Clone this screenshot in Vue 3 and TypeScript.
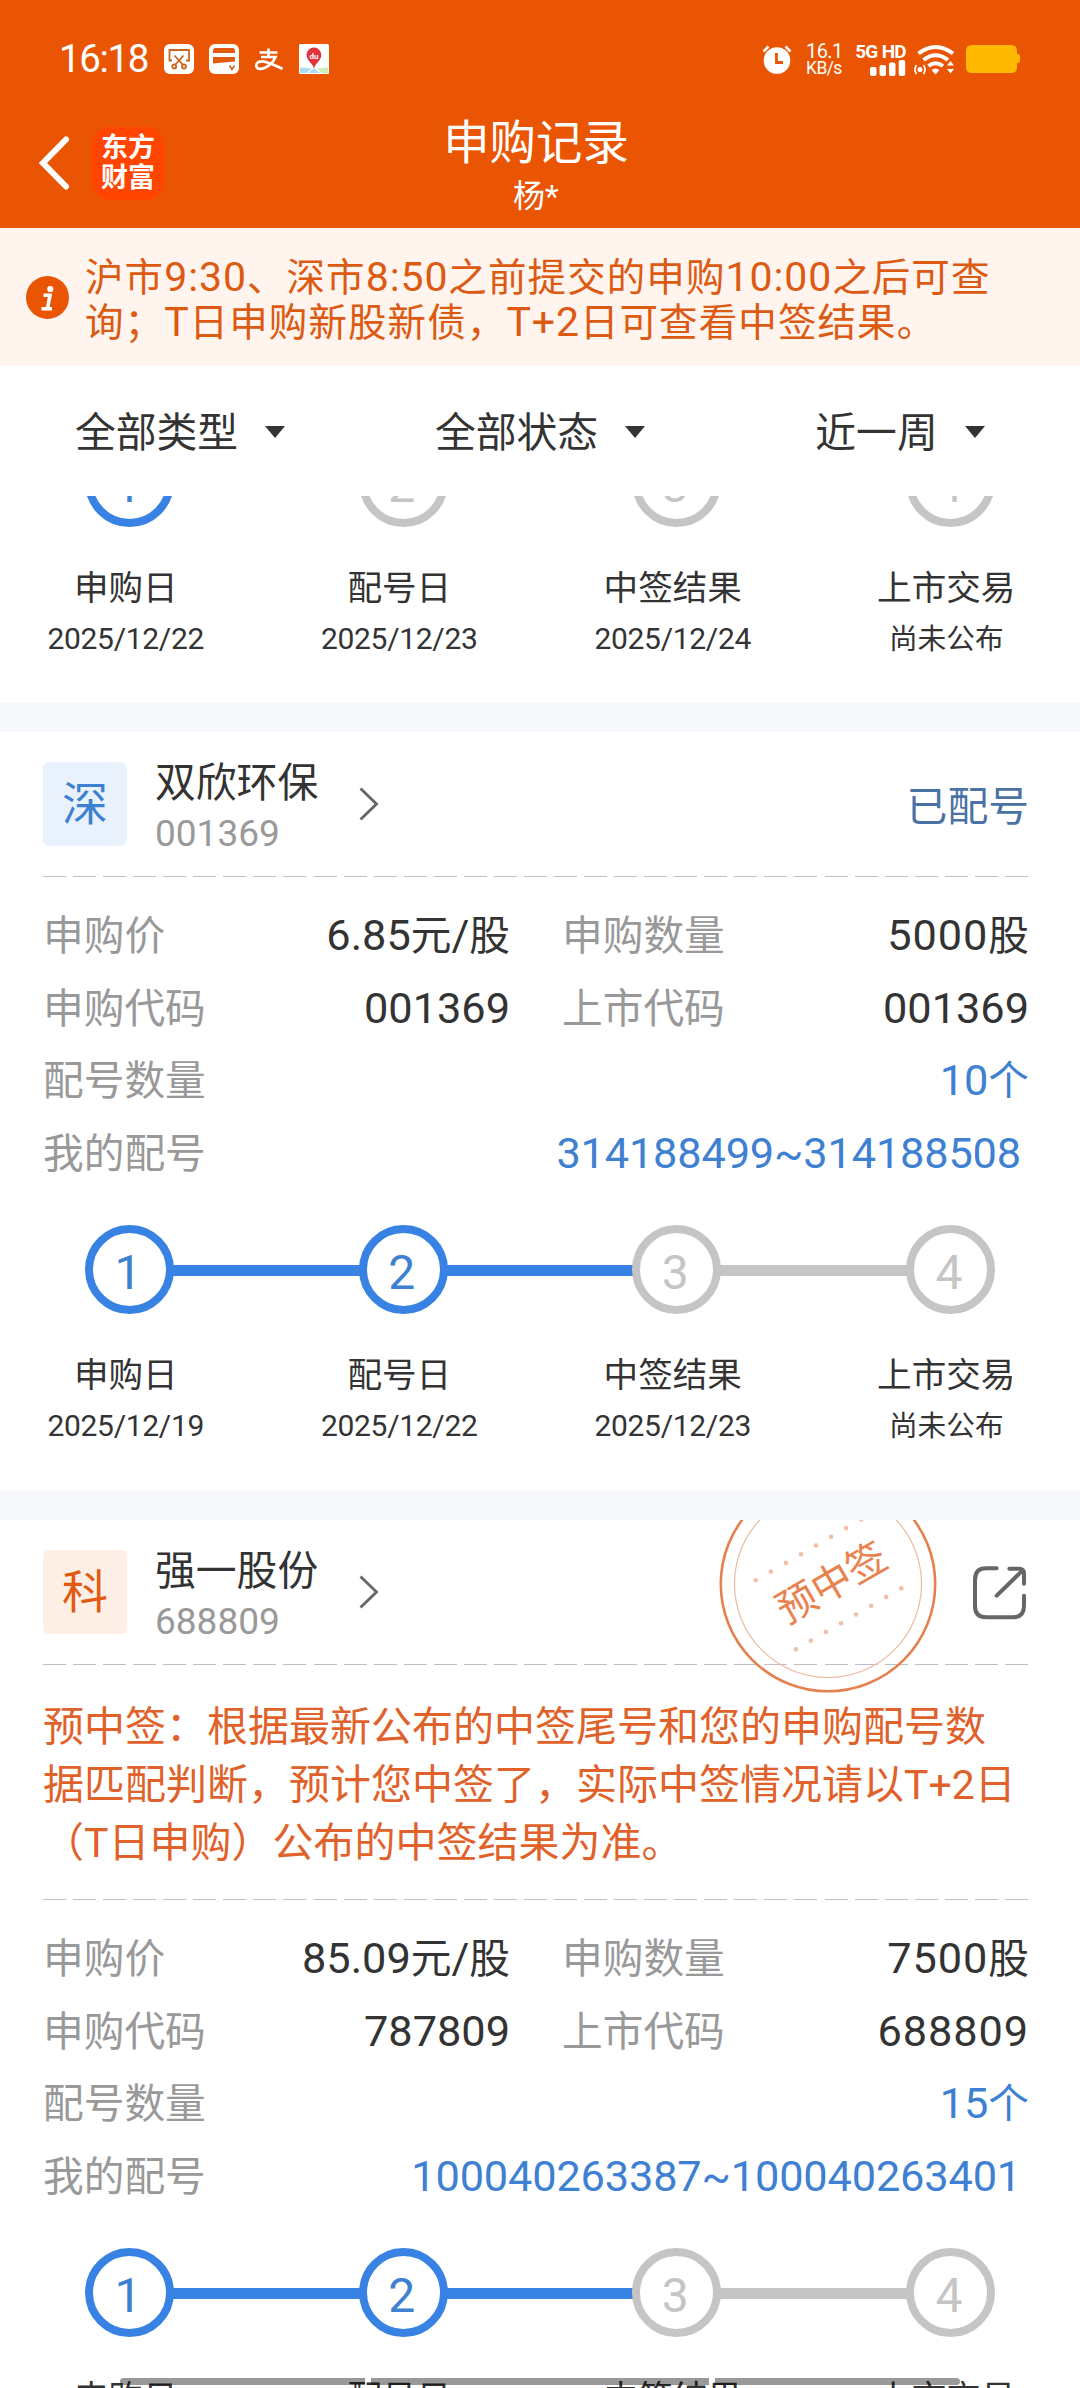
<script setup lang="ts">
interface Step {
  label: string
  date: string
  done: boolean
}
interface Item {
  market?: string
  tone?: 'blue' | 'orange'
  name?: string
  code?: string
  status?: string
  prediction?: string[]
  price?: string
  amount?: string
  applyCode?: string
  listCode?: string
  lotCount?: string
  lots?: string
  steps: Step[]
}
interface Run {
  text: string
  num: boolean
}

const makeSteps = (dates: string[], done: number): Step[] =>
  ['申购日', '配号日', '中签结果', '上市交易'].map((label, i) => ({
    label,
    date: dates[i],
    done: i < done,
  }))

// Latin digits are set slightly larger than the surrounding Chinese text
const runs = (s: string): Run[] =>
  (s.match(/[\x20-\x7e]+|[^\x20-\x7e]+/g) ?? []).map((text) => ({
    text,
    num: /^[\x20-\x7e]/.test(text),
  }))

const noticeLines = [
  '沪市9:30、深市8:50之前提交的申购10:00之后可查',
  '询；T日申购新股新债，T+2日可查看中签结果。',
]
const filters = ['全部类型', '全部状态', '近一周']

const items: Item[] = [
  { steps: makeSteps(['2025/12/22', '2025/12/23', '2025/12/24', '尚未公布'], 1) },
  {
    market: '深',
    tone: 'blue',
    name: '双欣环保',
    code: '001369',
    status: '已配号',
    price: '6.85元/股',
    amount: '5000股',
    applyCode: '001369',
    listCode: '001369',
    lotCount: '10个',
    lots: '314188499~314188508',
    steps: makeSteps(['2025/12/19', '2025/12/22', '2025/12/23', '尚未公布'], 2),
  },
  {
    market: '科',
    tone: 'orange',
    name: '强一股份',
    code: '688809',
    prediction: [
      '预中签：根据最新公布的中签尾号和您的申购配号数',
      '据匹配判断，预计您中签了，实际中签情况请以T+2日',
      '（T日申购）公布的中签结果为准。',
    ],
    price: '85.09元/股',
    amount: '7500股',
    applyCode: '787809',
    listCode: '688809',
    lotCount: '15个',
    lots: '100040263387~100040263401',
    steps: makeSteps(['2025/12/19', '2025/12/22', '2025/12/23', '尚未公布'], 2),
  },
]
const dots = [0, 1, 2, 3, 4, 5, 6, 7]
</script>

<template>
  <div class="app">
    <header class="top">
      <div class="statusbar">
        <div class="sb-left">
          <span class="time">16:18</span>
          <svg class="sb-icon" width="30" height="30" viewBox="0 0 30 30">
            <rect width="30" height="30" rx="6" fill="#fff" />
            <g fill="none" stroke="#c9651f" stroke-width="1.8">
              <path d="M8 16.5H5.5V6H25v10.500H22" />
              <path d="M10.500 11.500L19 21M19.500 11.500L11 21" />
              <circle cx="10.200" cy="22.500" r="2" />
              <circle cx="20" cy="22.500" r="2" />
            </g>
          </svg>
          <svg class="sb-icon" width="30" height="30" viewBox="0 0 30 30">
            <rect width="30" height="30" rx="6" fill="#fff" />
            <path d="M4 9V6.500Q4 4 6.500 4H23.500Q26 4 26 6.500V9Z" fill="#e05a10" />
            <path d="M4 13H26V17.500L4 19.500Z" fill="#e05a10" />
            <path d="M20.500 21.500L23 25.500L25.500 21.500" fill="none" stroke="#c9651f" stroke-width="1.500" />
          </svg>
          <svg class="sb-icon pay" width="30" height="30" viewBox="0 0 30 30">
            <g fill="none" stroke="#fff">
              <path d="M5.500 8.500H23.500M14.500 4.500V13.500" stroke-width="2.700" />
              <path d="M7 13H21.500Q18.500 20 11.500 23.500Q3.500 27 2.200 22Q2.200 17 9 17.300Q14 17.800 28.500 24.800" stroke-width="2.700" />
            </g>
          </svg>
          <svg class="sb-icon" width="30" height="30" viewBox="0 0 30 30">
            <rect width="30" height="30" rx="1.500" fill="#fff" />
            <path d="M1 23.500L13 24.500L7 29H1Z" fill="#a9dcf5" />
            <path d="M9 29L15 24L21 29Z" fill="#a9dcf5" />
            <path d="M17 24.500L29 23.500V29H23Z" fill="#cdeeb4" />
            <path d="M15 24.500C14 19.500 7.500 16.500 7.500 11A7.300 7.300 0 0 1 22.300 11C22.300 16.500 16 19.500 15 24.500Z" fill="#e2323c" />
            <text x="15" y="14.500" text-anchor="middle" font-size="8" font-weight="700" fill="#fff" font-family="Roboto, sans-serif">du</text>
          </svg>
        </div>
        <div class="sb-right">
          <svg width="30" height="30" viewBox="0 0 30 30">
            <circle cx="15" cy="16.500" r="13.300" fill="#fff" />
            <path d="M1.500 7.500L6.500 2.500M28.500 7.500L23.500 2.500" stroke="#fff" stroke-width="2.600" fill="none" />
            <path d="M14.500 9V18.500H21" stroke="#e95605" stroke-width="2.800" fill="none" />
          </svg>
          <div class="speed"><span class="sp1">16.1</span><span class="sp2">KB/s</span></div>
          <div class="cell">
            <span class="net">5G HD</span>
            <svg width="36" height="16" viewBox="0 0 36 16">
              <g fill="#fff">
                <rect x="0" y="7" width="6.500" height="9" rx="2" />
                <rect x="9.500" y="5" width="6.500" height="11" rx="2" />
                <rect x="19" y="2.500" width="6.500" height="13.500" rx="2" />
                <rect x="28.700" y="0" width="6.500" height="16" rx="2" />
              </g>
            </svg>
          </div>
          <svg class="wifi" width="42" height="31" viewBox="0 0 42 31">
            <g fill="none" stroke="#fff" stroke-width="4">
              <path d="M4.500 9.500Q21.500 -3.500 39 9.500" />
              <path d="M9.500 16Q21.500 6.500 34 16" />
              <path d="M14.500 22Q21.500 16.500 29 22" />
            </g>
            <path d="M17.500 26Q21.500 23 25.500 26L21.500 30.500Z" fill="#fff" />
            <circle cx="6" cy="25.500" r="2.500" fill="#fff" />
            <path d="M2.500 21Q-0.500 25.500 2.500 30M9.500 21Q12.500 25.500 9.500 30" fill="none" stroke="#fff" stroke-width="1.700" />
            <path d="M33 21.500L36.500 17L40 21.500ZM33 25L36.500 29.500L40 25Z" fill="#fff" />
          </svg>
          <svg width="55" height="28" viewBox="0 0 55 28">
            <path d="M6 0H45Q51 0 51 6V9H52Q54 9 54 11V16Q54 18 52 18H51V22Q51 28 45 28H6Q0 28 0 22V6Q0 0 6 0Z" fill="#ffb901" />
          </svg>
        </div>
      </div>
      <div class="navbar">
        <div class="nav-left">
          <svg width="32" height="56" viewBox="0 0 32 56">
            <path d="M27 4.500L4 28L27 51.500" fill="none" stroke="#fff" stroke-width="6" stroke-linecap="round" stroke-linejoin="miter" />
          </svg>
          <div class="logo"><span>东方</span><span>财富</span></div>
        </div>
        <div class="titles">
          <h1>申购记录</h1>
          <p>杨*</p>
        </div>
      </div>
    </header>

    <section class="notice">
      <svg width="43" height="43" viewBox="0 0 43 43">
        <circle cx="21.500" cy="21.500" r="21.500" fill="#ea5504" />
        <circle cx="24.300" cy="13" r="3.100" fill="#fff" />
        <path d="M17.500 19.300H24L21.500 32.500M15.500 32.800H26" fill="none" stroke="#fff" stroke-width="3.600" />
      </svg>
      <div class="notice-text">
        <p v-for="(line, n) in noticeLines" :key="n">
          <span v-for="(r, i) in runs(line)" :key="i" :class="{ num: r.num }">{{ r.text }}</span>
        </p>
      </div>
    </section>

    <nav class="filters">
      <div v-for="f in filters" :key="f" class="filter">
        <span>{{ f }}</span>
        <svg width="20" height="12" viewBox="0 0 20 12"><path d="M0 0H20L10 12Z" fill="#333" /></svg>
      </div>
    </nav>

    <main class="list">
      <article v-for="(item, k) in items" :key="k" class="card">
        <template v-if="item.name">
          <svg v-if="item.prediction" class="stamp" width="220" height="220" viewBox="-110 -110 220 220">
            <circle r="107.200" fill="none" stroke="#e5804f" stroke-width="2.600" />
            <circle r="93.500" fill="none" stroke="#efb8a0" stroke-width="1.200" />
            <g fill="#f0bfa8">
              <circle v-for="d in dots" :key="'a' + d" :cx="-72.2 + d * 15.07" :cy="-3.700 - d * 8.700" r="2.300" />
              <circle v-for="d in dots" :key="'b' + d" :cx="-32.2 + d * 15.07" :cy="65.300 - d * 8.700" r="2.300" />
            </g>
            <text class="stamp-text" transform="translate(3.200 -2) rotate(-30)" x="0" y="15" text-anchor="middle">预中签</text>
          </svg>
          <div class="card-head">
            <div class="badge" :class="item.tone">{{ item.market }}</div>
            <div class="ident">
              <span class="name">{{ item.name }}</span>
              <span class="code">{{ item.code }}</span>
            </div>
            <svg class="chev" width="20" height="34" viewBox="0 0 20 34">
              <path d="M1.500 1.500L17.500 17L1.500 32.500" fill="none" stroke="#666" stroke-width="2.800" />
            </svg>
            <span v-if="item.status" class="status">{{ item.status }}</span>
            <svg v-else class="share" width="55" height="55" viewBox="0 0 165 165">
              <g fill="none" stroke="#666" stroke-width="12" stroke-linecap="round" stroke-linejoin="round">
                <path d="M74 10H43Q9 10 9 44V123Q9 157 43 157H122Q156 157 156 123V92" />
                <path d="M112 11H141Q156 11 156 26V56M74 92L151 17" />
              </g>
            </svg>
          </div>
          <div class="dash"></div>
          <template v-if="item.prediction">
            <div class="prediction">
              <p v-for="line in item.prediction" :key="line">{{ line }}</p>
            </div>
            <div class="dash"></div>
          </template>
          <dl class="info">
            <div class="row">
              <dt>申购价</dt>
              <dd class="first"><span v-for="(r, i) in runs(item.price!)" :key="i" :class="{ num: r.num }">{{ r.text }}</span></dd>
              <dt>申购数量</dt>
              <dd class="wide"><span v-for="(r, i) in runs(item.amount!)" :key="i" :class="{ num: r.num }">{{ r.text }}</span></dd>
            </div>
            <div class="row">
              <dt>申购代码</dt>
              <dd class="first"><span class="num">{{ item.applyCode }}</span></dd>
              <dt>上市代码</dt>
              <dd :class="{ wide: !item.listCode!.includes('1') }"><span class="num">{{ item.listCode }}</span></dd>
            </div>
            <div class="row">
              <dt>配号数量</dt>
              <dd class="link"><span v-for="(r, i) in runs(item.lotCount!)" :key="i" :class="{ num: r.num }">{{ r.text }}</span></dd>
            </div>
            <div class="row">
              <dt>我的配号</dt>
              <dd class="link lots"><span class="num">{{ item.lots }}</span></dd>
            </div>
          </dl>
        </template>
        <div class="track">
          <template v-for="(s, i) in item.steps" :key="i">
            <i v-if="i > 0" class="bar" :class="{ on: item.steps[i - 1].done }"></i>
            <b class="dot" :class="{ on: s.done }">{{ i + 1 }}</b>
          </template>
        </div>
        <div class="labels">
          <div v-for="(s, i) in item.steps" :key="i" class="label">
            <span class="l1">{{ s.label }}</span>
            <span class="l2" :class="{ zh: s.date === '尚未公布' }">{{ s.date }}</span>
          </div>
        </div>
      </article>
    </main>

    <div class="home-indicator"><i></i><i></i><i></i></div>
  </div>
</template>

<style>
body {
  margin: 0;
  background: #fff;
}
</style>

<style scoped>
.app {
  position: relative;
  display: flex;
  flex-direction: column;
  width: 1080px;
  height: 2388px;
  overflow: hidden;
  background: #fff;
  color: #333;
  font-family: Roboto, "Noto Sans CJK SC", sans-serif;
}
p,
h1,
dl,
dt,
dd {
  margin: 0;
}
svg {
  display: block;
  flex: none;
}
.top {
  height: 228px;
  flex: none;
  background: #ea5504;
  color: #fff;
}
.statusbar {
  display: flex;
  justify-content: space-between;
  height: 118px;
  box-sizing: border-box;
  padding: 0 59px 0 59px;
}
.sb-left,
.sb-right {
  display: flex;
  align-items: center;
  height: 118px;
}
.sb-left .sb-icon {
  margin-right: 15px;
}
.time {
  width: 105px;
  font-size: 38.5px;
  letter-spacing: -1.4px;
  line-height: 40px;
}
.speed {
  display: flex;
  flex-direction: column;
  width: 37px;
  margin-left: 14px;
  white-space: nowrap;
}
.sp1 {
  font-size: 20px;
  line-height: 17px;
  letter-spacing: -0.6px;
}
.sp2 {
  font-size: 17.5px;
  line-height: 16px;
  letter-spacing: -0.6px;
}
.cell {
  display: flex;
  flex-direction: column;
  align-items: flex-end;
  width: 50px;
  margin-left: 13px;
}
.net {
  font-size: 19px;
  line-height: 17px;
  font-weight: 700;
  letter-spacing: -0.7px;
  white-space: nowrap;
}
.wifi {
  margin: 0 10px 0 8px;
}
.navbar {
  display: grid;
  grid-template-columns: 1fr 200px 1fr;
  height: 110px;
}
.nav-left {
  display: flex;
  height: 90px;
  padding-left: 39px;
  align-items: center;
}
.logo {
  display: flex;
  flex-direction: column;
  justify-content: center;
  align-items: center;
  width: 72px;
  height: 73px;
  margin-left: 21px;
  border-radius: 17px;
  background: #ff4500;
  font-size: 27px;
  line-height: 30px;
  font-weight: 700;
}
.titles {
  width: 192px;
  text-align: center;
}
.titles h1 {
  font-size: 46.4px;
  line-height: 50px;
  font-weight: 400;
}
.titles p {
  font-size: 32px;
  line-height: 36px;
  margin-top: 10px;
}
.notice {
  display: flex;
  flex: none;
  height: 138px;
  box-sizing: border-box;
  padding: 27px 0 0 26px;
  background: #fff4ee;
  color: #dc5a12;
}
.notice > svg {
  margin-top: 21px;
}
.notice-text {
  margin-left: 16px;
  font-size: 38.5px;
  line-height: 44px;
  letter-spacing: 1.1px;
  white-space: nowrap;
}
.notice-text .num {
  font-size: 41px;
  letter-spacing: 0.9px;
}
.filters {
  display: flex;
  flex: none;
  height: 130px;
}
.filter {
  flex: 1;
  display: flex;
  justify-content: center;
  align-items: center;
  gap: 27px;
  height: 132px;
  font-size: 40.8px;
}
.filter span {
  padding-bottom: 5px;
}
.list {
  flex: 1;
  overflow: hidden;
}
.card {
  position: relative;
  overflow: hidden;
  box-sizing: border-box;
  height: 788px;
  border-bottom: 30px solid #f6f8fb;
}
.card:first-child {
  margin-top: -58px;
  height: 294px;
  border-bottom-width: 29px;
}
.card:last-child {
  height: 1200px;
}
.card-head {
  display: flex;
  height: 144px;
  box-sizing: border-box;
  padding: 30px 51px 0 43px;
}
.badge {
  width: 84px;
  height: 84px;
  border-radius: 6px;
  text-align: center;
  font-size: 46px;
  line-height: 85px;
}
.badge.blue {
  background: #e9f2fc;
  color: #3e80d2;
}
.badge.orange {
  background: #fdeee6;
  color: #e25a10;
}
.ident {
  display: flex;
  flex-direction: column;
  width: 204px;
  margin-left: 28px;
}
.name {
  font-size: 40.8px;
  line-height: 42px;
}
.code {
  font-size: 37px;
  line-height: 42px;
  margin-top: 9px;
  color: #999;
}
.chev {
  margin-top: 25px;
}
.status {
  margin-left: auto;
  font-size: 40.8px;
  line-height: 91px;
  color: #4a72a5;
}
.share {
  margin-top: 15px;
  margin-left: auto;
  margin-right: 2px;
}
.dash {
  height: 1px;
  margin: 0 51px 0 43px;
  background: repeating-linear-gradient(90deg, #bfbfbf 0 23px, transparent 23px 30.06px);
}
.prediction {
  height: 234px;
  box-sizing: border-box;
  padding: 33px 0 0 43px;
  font-size: 41px;
  line-height: 58px;
  color: #e0622a;
  white-space: nowrap;
}
.info {
  padding: 23px 51px 0 43px;
  height: 348px;
  box-sizing: border-box;
}
.row {
  display: flex;
  height: 72.5px;
  font-size: 40.7px;
  line-height: 72.5px;
}
.row dt {
  width: 167px;
  color: #999;
}
.row dd {
  flex: 1;
  text-align: right;
  white-space: nowrap;
}
.row dd.first {
  flex: none;
  width: 300px;
  margin-right: 52px;
}
.num {
  font-size: 43.3px;
  letter-spacing: 0;
}
.row dd.wide .num {
  letter-spacing: 0.9px;
}
.row dd.link {
  color: #3e80d2;
}
.row dd.lots {
  padding-right: 8px;
}
.row dd.lots .num {
  letter-spacing: -0.15px;
}
.track {
  display: flex;
  align-items: center;
  height: 89px;
  padding: 0 85px;
}
.dot {
  width: 89px;
  height: 89px;
  box-sizing: border-box;
  padding-right: 3px;
  border: 8.500px solid #c5c5c5;
  border-radius: 50%;
  color: #c5c5c5;
  font-size: 48px;
  font-weight: 400;
  line-height: 79px;
  text-align: center;
}
.dot.on {
  border-color: #3782e2;
  color: #3e80d2;
}
.bar {
  flex: 1;
  height: 11px;
  margin: 2px -2px 0;
  background: #c5c5c5;
}
.bar.on {
  background: #3782e2;
}
.labels {
  display: grid;
  grid-template-columns: repeat(4, 273.5px);
  margin: 40px 0 0 -11px;
}
.label {
  display: flex;
  flex-direction: column;
  text-align: center;
}
.l1 {
  font-size: 34.6px;
  line-height: 42px;
}
.l2 {
  font-size: 30px;
  line-height: 40px;
  margin-top: 10px;
  letter-spacing: -0.3px;
}
.l2.zh {
  font-size: 28.7px;
  letter-spacing: 0;
}
.stamp {
  position: absolute;
  left: 717.5px;
  top: -46px;
}
.stamp-text {
  font-size: 40px;
  fill: #e8824f;
}
.home-indicator {
  position: absolute;
  left: 120px;
  bottom: 3px;
  width: 840px;
  display: flex;
  gap: 6px;
  border-radius: 4px;
  overflow: hidden;
}
.home-indicator i {
  height: 7px;
  width: 245px;
  background: rgba(0, 0, 0, 0.4);
}
.home-indicator i:nth-child(2) {
  flex: 1;
}
</style>
